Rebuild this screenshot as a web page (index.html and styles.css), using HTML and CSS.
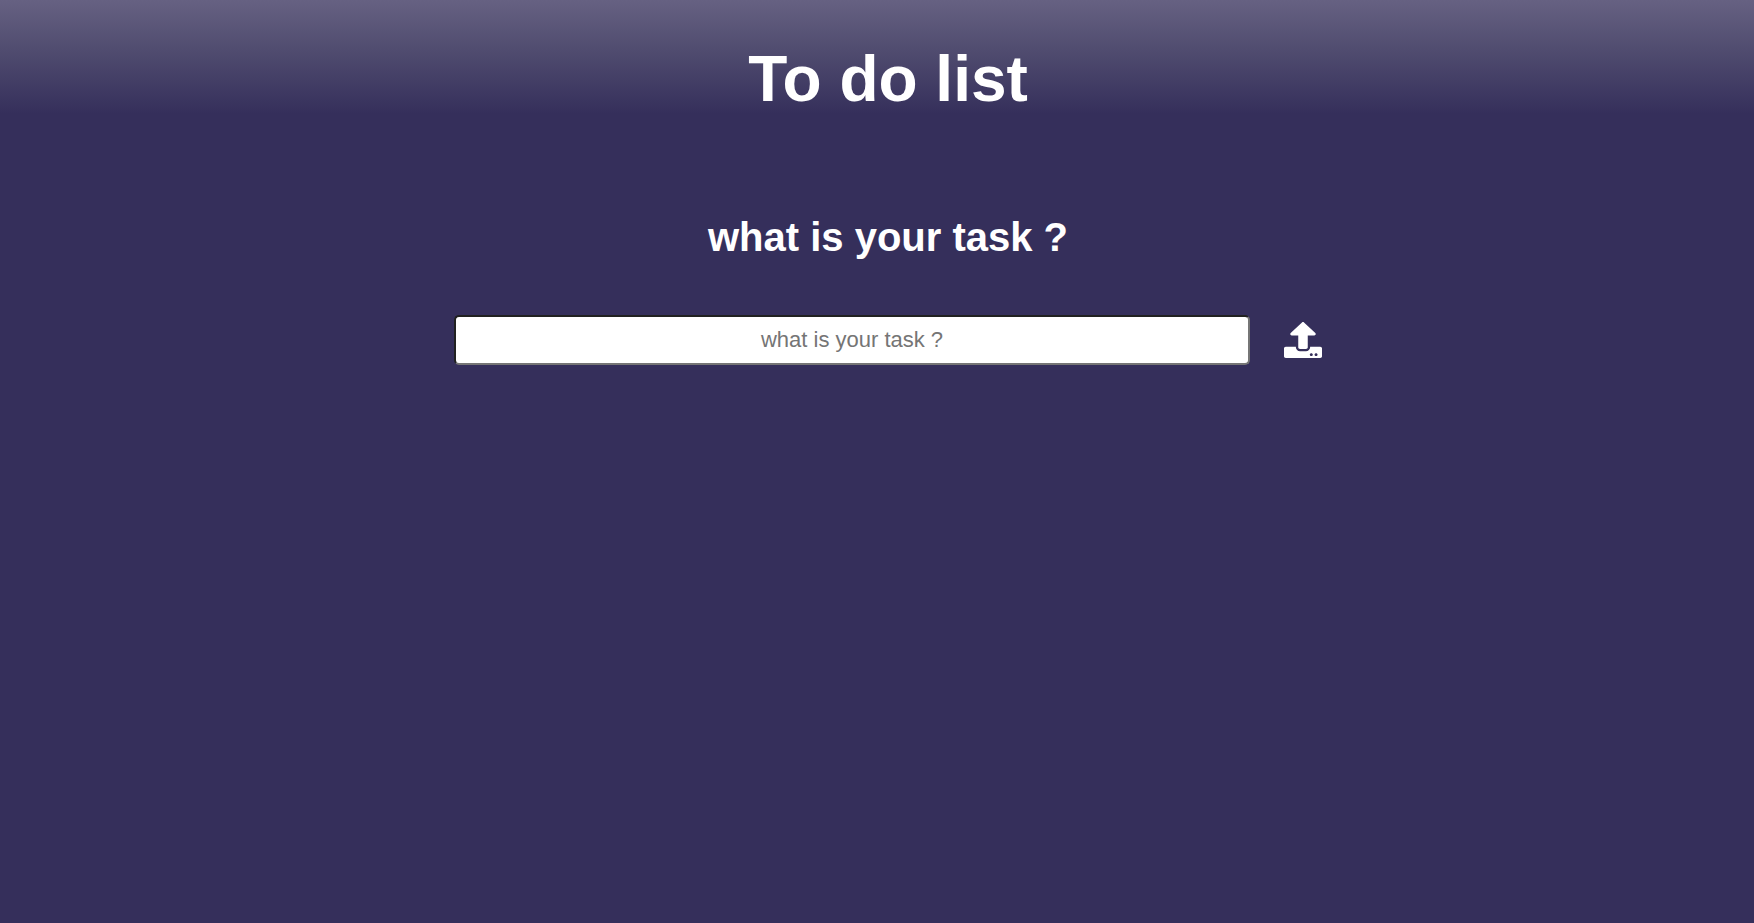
FILE: index.html
```html
<!DOCTYPE html>
<html lang="en">
<head>
  <meta charset="utf-8">
  <title>To do list</title>
  <link rel="stylesheet" href="styles.css">
</head>
<body>
  <main class="page">
    <h1 class="title">To do list</h1>
    <h2 class="subtitle"><label for="task">what is your task ?</label></h2>
    <form class="task-form">
      <input class="task-input" id="task" type="text" placeholder="what is your task ?">
      <button class="task-submit" type="button" aria-label="Add task">
        <svg class="icon" viewBox="0 0 512 512" preserveAspectRatio="none" aria-hidden="true">
          <path fill="currentColor" d="M296 384h-80c-13.3 0-24-10.7-24-24V192h-87.7c-17.8 0-26.7-21.5-14.1-34.1L242.3 5.7c7.5-7.5 19.8-7.5 27.3 0l152.2 152.2c12.6 12.6 3.7 34.1-14.1 34.1H320v168c0 13.3-10.7 24-24 24zm216-8v112c0 13.3-10.7 24-24 24H24c-13.3 0-24-10.7-24-24V376c0-13.3 10.7-24 24-24h136v8c0 30.9 25.1 56 56 56h80c30.9 0 56-25.1 56-56v-8h136c13.3 0 24 10.7 24 24zm-124 88c0-11-9-20-20-20s-20 9-20 20 9 20 20 20 20-9 20-20zm64 0c0-11-9-20-20-20s-20 9-20 20 9 20 20 20 20-9 20-20z"/>
        </svg>
      </button>
    </form>
  </main>
</body>
</html>
```
FILE: styles.css
```css
* {
  box-sizing: border-box;
}

body {
  margin: 0;
  min-height: 100vh;
  background: #352f5b linear-gradient(#666182 0, #514d70 48px, #352f5b 114px) no-repeat;
  color: #fff;
  font-family: "Liberation Sans", Arial, sans-serif;
}

.page {
  display: flex;
  flex-direction: column;
  align-items: center;
  padding: 41px 0 0 22px;
}

.title {
  margin: 0;
  font-size: 64px;
  line-height: 76px;
}

.subtitle {
  margin: 96px 0 54px;
  font-size: 40px;
  line-height: 48px;
}

.task-form {
  display: flex;
  align-items: center;
  justify-content: center;
  gap: 34px;
  width: 100%;
}

.task-input {
  width: 46%;
  height: 50px;
  padding: 0 8px;
  border: 2px inset #767676;
  border-radius: 5px;
  background: #fff;
  font: 22px "Liberation Sans", Arial, sans-serif;
  text-align: center;
}

.task-input::placeholder {
  color: #757575;
}

.task-submit {
  display: flex;
  padding: 0;
  border: 0;
  background: none;
  color: #fff;
  cursor: pointer;
}

.icon {
  width: 38px;
  height: 36px;
}
```
